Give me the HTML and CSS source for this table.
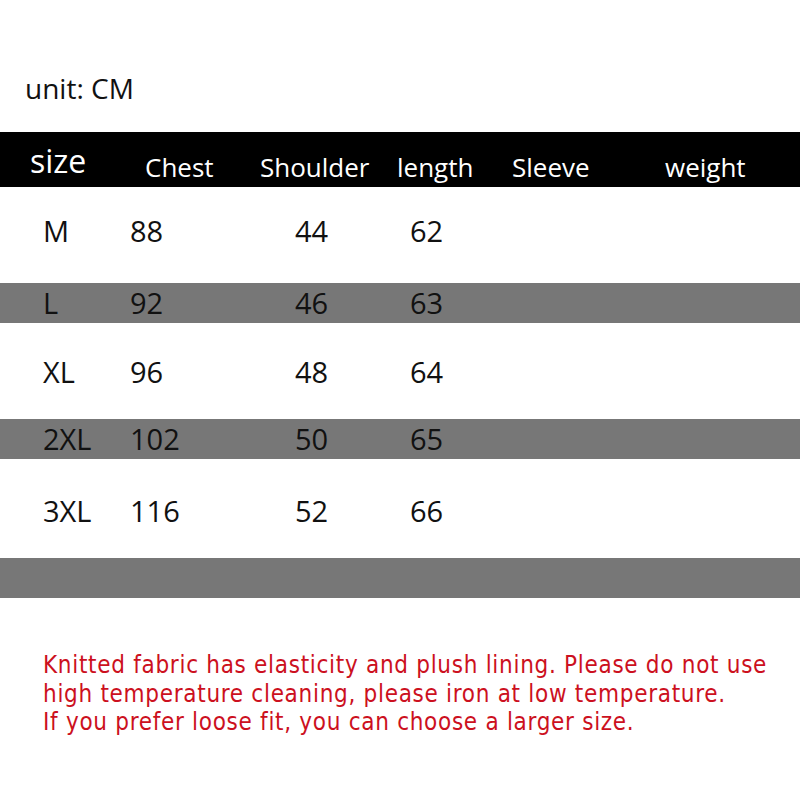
FILE: index.html
```html
<!DOCTYPE html>
<html>
<head>
<meta charset="utf-8">
<link rel="stylesheet" href="styles.css">
</head>
<body>
<div class="page">
  <div class="unit">unit: CM</div>
  <div class="head">
    <span class="h-size">size</span>
    <span>Chest</span>
    <span>Shoulder</span>
    <span>length</span>
    <span>Sleeve</span>
    <span>weight</span>
  </div>
  <div class="row white r1"><span>M</span><span>88</span><span>44</span><span>62</span></div>
  <div class="row gray"><span>L</span><span>92</span><span>46</span><span>63</span></div>
  <div class="row white r2"><span>XL</span><span>96</span><span>48</span><span>64</span></div>
  <div class="row gray"><span>2XL</span><span>102</span><span>50</span><span>65</span></div>
  <div class="row white r3"><span>3XL</span><span>116</span><span>52</span><span>66</span></div>
  <div class="row gray empty"></div>
  <div class="note">
    Knitted fabric has elasticity and plush lining. Please do not use<br>
    high temperature cleaning, please iron at low temperature.<br>
    If you prefer loose fit, you can choose a larger size.
  </div>
</div>
</body>
</html>
```

FILE: styles.css
```css
html, body {
  margin: 0;
  padding: 0;
  background: #fff;
}
.page {
  width: 800px;
  height: 800px;
  font-family: "Open Sans", "Noto Sans", sans-serif;
  color: #111;
  overflow: hidden;
}
.unit {
  height: 132px;
  box-sizing: border-box;
  padding: 68px 0 0 25px;
  font-size: 28px;
  line-height: 40px;
}
.head {
  height: 55px;
  background: #000;
  color: #fff;
  display: grid;
  grid-template-columns: 115px 115px 137px 115px 153px 1fr;
  padding-left: 30px;
  font-size: 26px;
  line-height: 1;
  align-items: end;
  padding-bottom: 7px;
  box-sizing: border-box;
}
.head .h-size {
  font-size: 32px;
  align-self: start;
  padding-top: 13px;
}
.row {
  display: grid;
  grid-template-columns: 87px 165px 115px 1fr;
  padding-left: 43px;
  font-size: 29px;
  align-items: center;
  box-sizing: border-box;
}
.white.r1 { height: 96px; padding-bottom: 10px; }
.white.r2 { height: 96px; padding-top: 0; }
.white.r3 { height: 99px; padding-top: 4px; }
.gray {
  height: 40px;
  background: #777;
  line-height: 34px;
}
.gray.empty { height: 40px; }
.note {
  padding: 53px 0 0 43px;
  color: #cc1020;
  font-family: "DejaVu Sans", sans-serif;
  font-stretch: condensed;
  font-size: 24px;
  letter-spacing: 0.7px;
  line-height: 28.5px;
}
```
